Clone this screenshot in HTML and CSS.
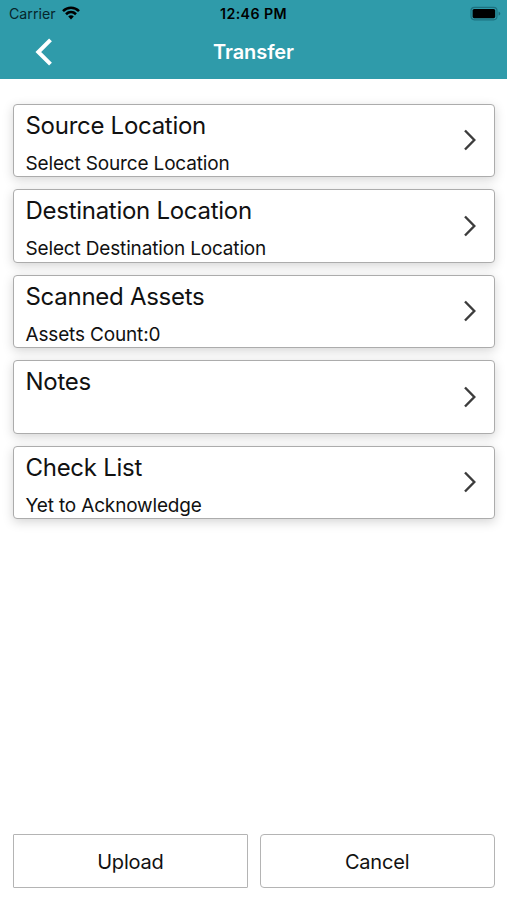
FILE: index.html
```html
<!DOCTYPE html>
<html lang="en">
<head>
<meta charset="utf-8">
<title>Transfer</title>
<link rel="stylesheet" href="styles.css">
</head>
<body>
<header class="header">
  <div class="status">
    <div class="carrier"><span>Carrier</span>
      <svg class="wifi" width="18" height="14" viewBox="0 0 18 14" fill="none" stroke="#000" stroke-width="2.6"><path d="M1 5.1C5.6.7 12.4.7 17 5.1M4 8.2c2.9-2.8 7.1-2.8 10 0"/><path d="M6.2 10.5c1.6-1.6 4-1.6 5.6 0L9 13.4z" fill="#000" stroke="none"/></svg>
    </div>
    <span class="time">12:46 PM</span>
    <svg class="battery" width="31" height="16" viewBox="0 0 31 16"><rect x="1" y="1.3" width="26" height="12.5" rx="3.5" fill="none" stroke="#1d7280" stroke-width="1.2"/><rect x="2.6" y="2.9" width="22.6" height="9.3" rx="1.6"/><path d="M28.6 5.4c2.2.8 2.2 3.4 0 4.2z" fill="#1d6874"/></svg>
  </div>
  <nav class="nav">
    <svg class="back" width="18" height="28" viewBox="0 0 18 28" fill="none" stroke="#fff" stroke-width="4"><path d="M15.5 1.8 3.3 14l12.2 12.2"/></svg>
    <h1>Transfer</h1>
  </nav>
</header>
<main class="list">
  <section class="card"><div><h2>Source Location</h2><p>Select Source Location</p></div><svg class="chevron" viewBox="0 0 14 22"><path d="m2 1.5 9.3 9.5L2 20.5"/></svg></section>
  <section class="card"><div><h2>Destination Location</h2><p>Select Destination Location</p></div><svg class="chevron" viewBox="0 0 14 22"><path d="m2 1.5 9.3 9.5L2 20.5"/></svg></section>
  <section class="card"><div><h2>Scanned Assets</h2><p>Assets Count:0</p></div><svg class="chevron" viewBox="0 0 14 22"><path d="m2 1.5 9.3 9.5L2 20.5"/></svg></section>
  <section class="card"><div><h2>Notes</h2></div><svg class="chevron" viewBox="0 0 14 22"><path d="m2 1.5 9.3 9.5L2 20.5"/></svg></section>
  <section class="card"><div><h2>Check List</h2><p>Yet to Acknowledge</p></div><svg class="chevron" viewBox="0 0 14 22"><path d="m2 1.5 9.3 9.5L2 20.5"/></svg></section>
</main>
<footer class="actions">
  <button class="button square">Upload</button>
  <button class="button">Cancel</button>
</footer>
</body>
</html>
```
FILE: styles.css
```css
* { box-sizing: border-box; }
body {
  margin: 0;
  height: 900px;
  display: flex;
  flex-direction: column;
  overflow: hidden;
  background: #fff;
  color: #111;
  font-family: Inter, "Liberation Sans", sans-serif;
}
h1, h2, p { margin: 0; font-weight: 400; }
.header {
  height: 79px;
  flex: none;
  background: #2f9baa;
}
.status {
  height: 27px;
  display: grid;
  grid-template-columns: 1fr auto 1fr;
  align-items: center;
  padding: 0 6px 0 9px;
  color: #000;
}
.carrier { display: flex; align-items: center; gap: 6px; font-size: 14.2px; color: #06262b; }
.wifi { margin-top: -1px; }
.time { font-size: 14.2px; font-weight: 600; letter-spacing: .4px; margin-left: -3px; }
.battery { justify-self: end; }
.nav {
  height: 51px;
  display: grid;
  grid-template-columns: 1fr auto 1fr;
  align-items: center;
}
.back { margin: -1px 0 0 35px; }
.nav h1 { color: #fff; font-size: 20px; font-weight: 600; line-height: 51px; letter-spacing: -.1px; }
.list {
  padding: 24.5px 12.5px 0 13px;
  display: flex;
  flex-direction: column;
  gap: 12px;
}
.card {
  height: 73.5px;
  flex: none;
  display: flex;
  justify-content: space-between;
  align-items: center;
  padding: 0 17px 0 11.5px;
  border: 1px solid #acacac;
  border-radius: 4px;
  background: #fff;
  box-shadow: 0 3px 11px rgba(0, 0, 0, .17);
}
.card > div { align-self: stretch; }
.card h2 { font-size: 24px; line-height: 30px; margin-top: 6px; letter-spacing: -.28px; }
.card p { font-size: 19px; line-height: 24px; margin-top: 11px; letter-spacing: -.16px; }
.chevron { width: 14px; height: 22px; fill: none; stroke: #3c3c3c; stroke-width: 2.4; }
.actions {
  margin-top: auto;
  padding: 0 12.5px 12px 13px;
  display: grid;
  grid-template-columns: 1fr 1fr;
  gap: 12px;
}
.button {
  height: 54px;
  padding: 1px 0 0;
  border: 1px solid #b4b4b4;
  border-radius: 4px;
  background: #fff;
  color: #111;
  font: 400 20px Inter, "Liberation Sans", sans-serif;
  letter-spacing: -.2px;
}
.square { border-radius: 1px; }
```
